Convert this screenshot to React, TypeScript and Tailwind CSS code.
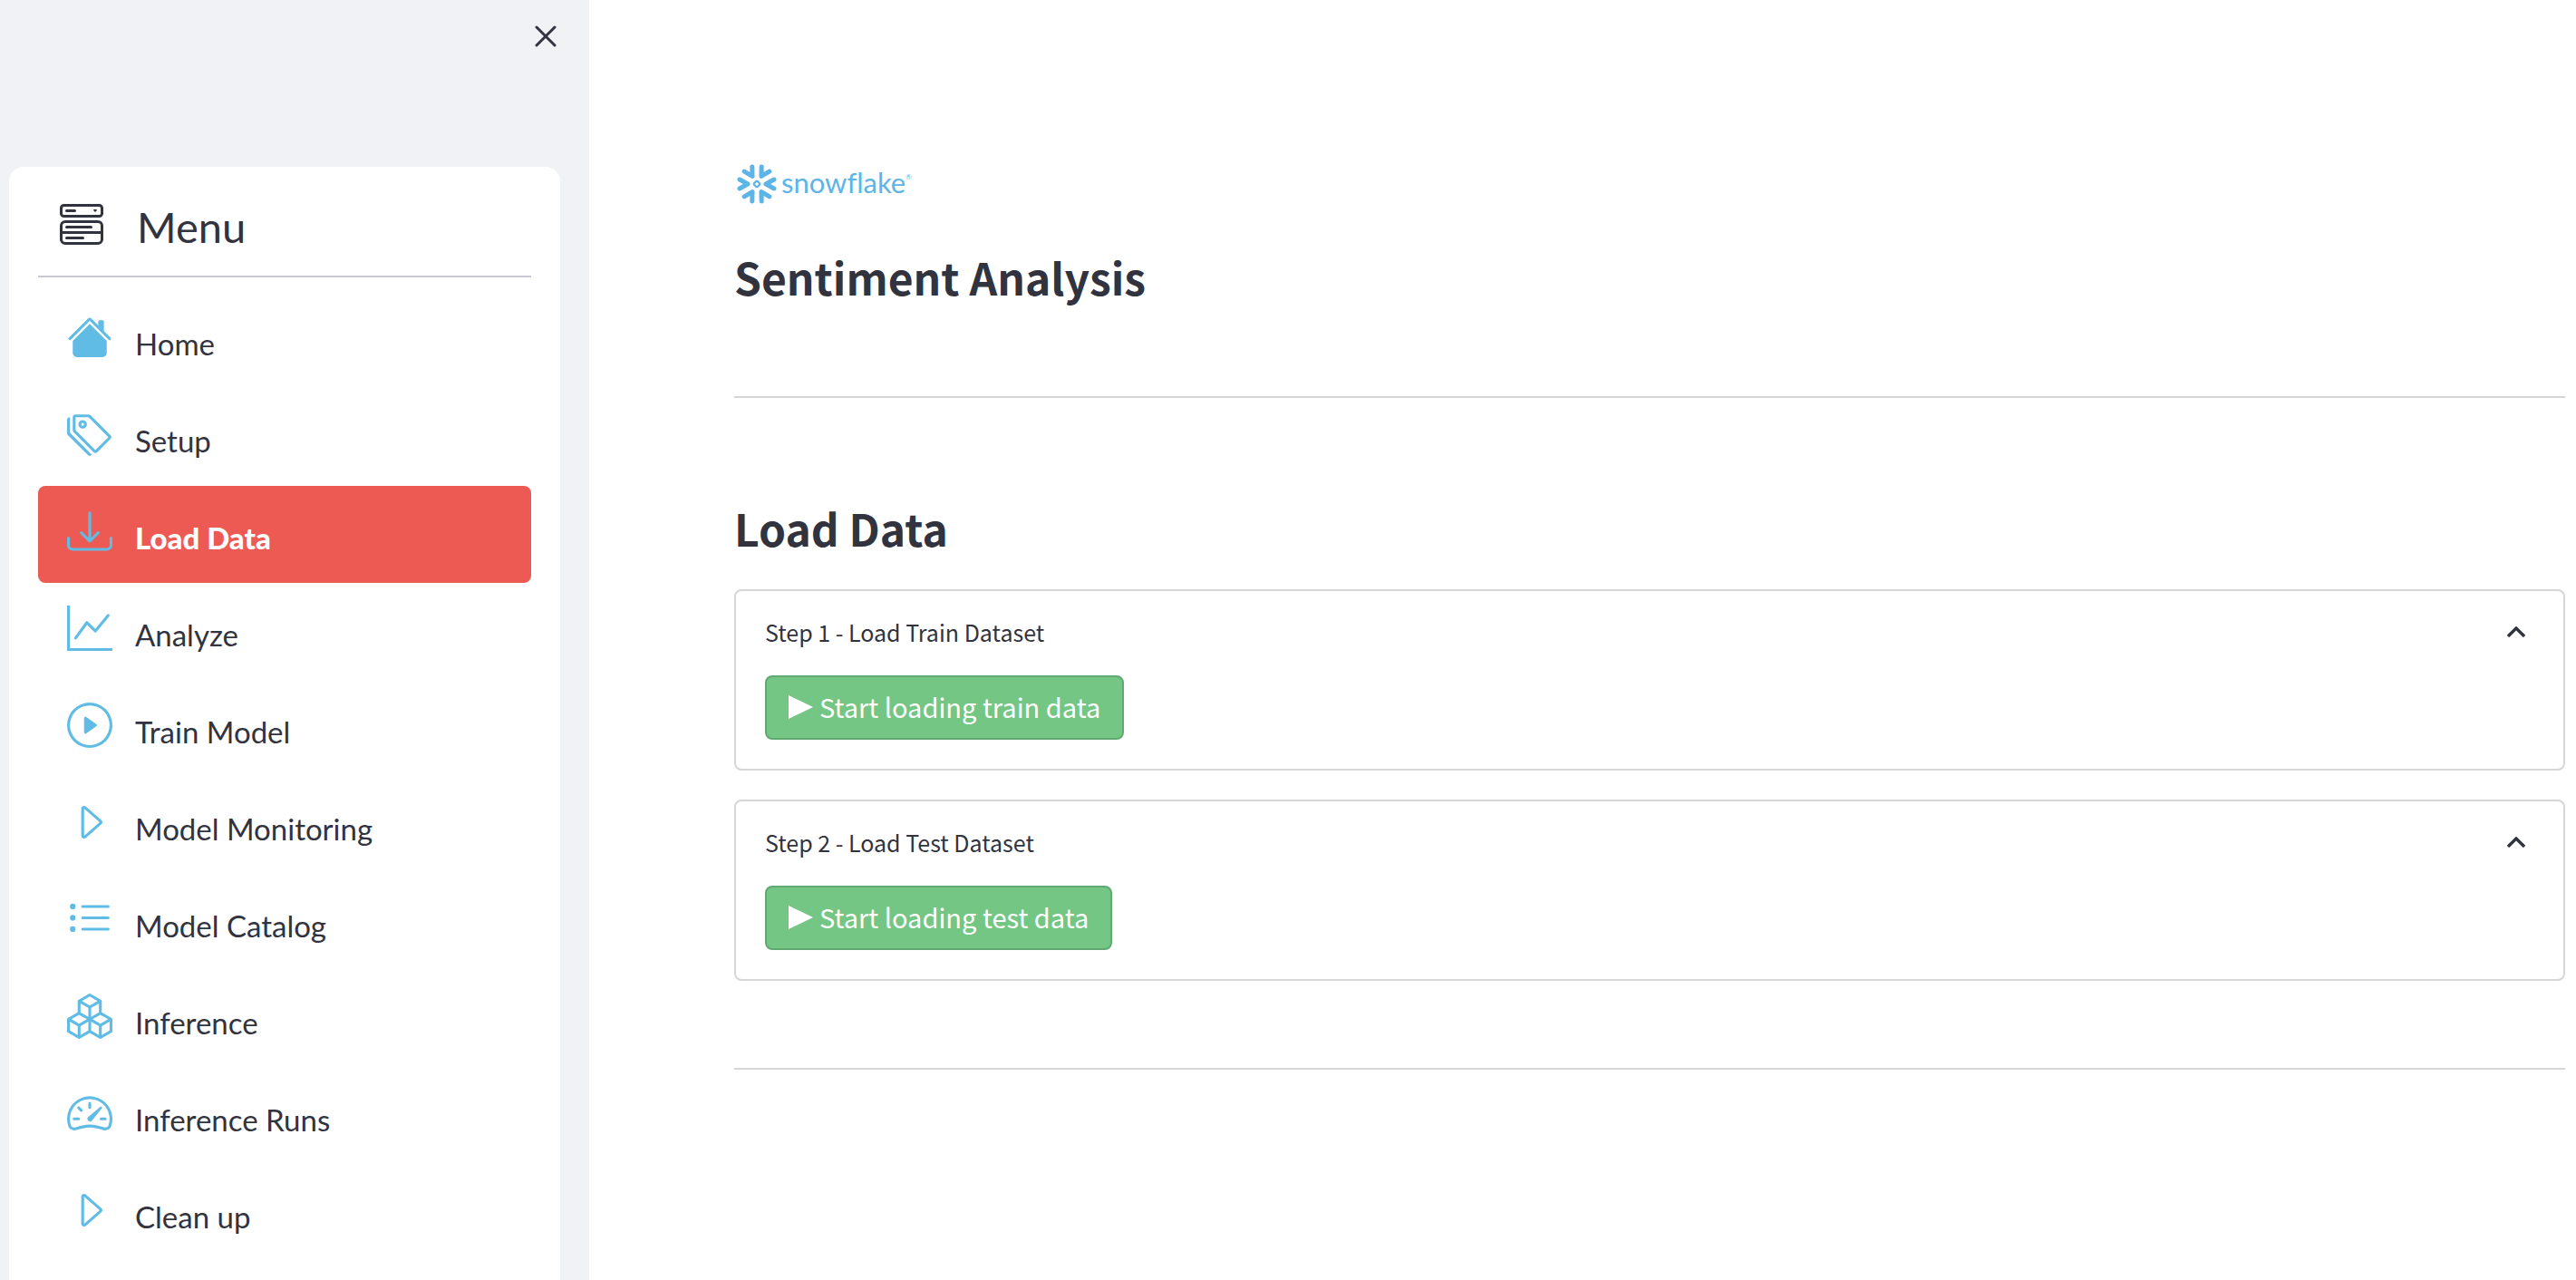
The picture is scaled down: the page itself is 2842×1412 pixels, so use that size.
import { BsBoxes, BsCaretRight, BsDownload, BsGraphUp, BsListUl, BsMenuButtonWide, BsPlayCircle, BsSpeedometer2, BsTags } from "react-icons/bs";
import type { ComponentType } from "react";

type IconProps = { className?: string };

function HouseIcon({ className }: IconProps) {
  return (
    <svg viewBox="0 0 16 16" fill="currentColor" className={className} aria-hidden="true">
      <path d="m8 3.293 6 6V13.5a1.5 1.5 0 0 1-1.5 1.5h-9A1.5 1.5 0 0 1 2 13.5V9.293l6-6zm5-.793V6l-2-2V2.5a.5.5 0 0 1 .5-.5h1a.5.5 0 0 1 .5.5z" />
      <path d="M7.293 1.5a1 1 0 0 1 1.414 0l6.647 6.646a.5.5 0 0 1-.708.708L8 2.207 1.354 8.854a.5.5 0 1 1-.708-.708L7.293 1.5z" />
    </svg>
  );
}

const items: { label: string; Icon: ComponentType<IconProps>; active?: boolean }[] = [
  { label: "Home", Icon: HouseIcon },
  { label: "Setup", Icon: BsTags },
  { label: "Load Data", Icon: BsDownload, active: true },
  { label: "Analyze", Icon: BsGraphUp },
  { label: "Train Model", Icon: BsPlayCircle },
  { label: "Model Monitoring", Icon: BsCaretRight },
  { label: "Model Catalog", Icon: BsListUl },
  { label: "Inference", Icon: BsBoxes },
  { label: "Inference Runs", Icon: BsSpeedometer2 },
  { label: "Clean up", Icon: BsCaretRight },
];

const arms = [0, 60, 120, 180, 240, 300];

function SnowflakeLogo() {
  return (
    <div className="flex h-11 items-center gap-1 pl-0.5 text-[#5db4e6]">
      <svg viewBox="-23 -22 46 44" className="h-11 w-[46px]" fill="none" stroke="currentColor" strokeLinecap="round" strokeLinejoin="round" aria-hidden="true">
        {arms.map((a) => (
          <path key={a} d="M10 0 19 -5M10 0 19 5" strokeWidth="5" transform={`rotate(${a})`} />
        ))}
        <rect x="-2.6" y="-2.6" width="5.2" height="5.2" rx="1" strokeWidth="2.2" transform="rotate(45)" />
      </svg>
      <span className="flex items-start pb-1 font-[Lato,sans-serif] text-[31px] leading-9 [font-variant-ligatures:none]">
        snowflake<span className="text-[8px] leading-6">®</span>
      </span>
    </div>
  );
}

function Step({ title, action }: { title: string; action: string }) {
  return (
    <section className="rounded-lg border-2 border-[#d6d6d6] px-8 pt-[27px] pb-8">
      <button type="button" aria-expanded="true" className="flex w-full items-center justify-between text-left text-[25px] leading-9">
        {title}
        <svg viewBox="0 0 20 12" className="mr-[10px] h-3 w-5" fill="none" stroke="currentColor" strokeWidth="3.4" aria-hidden="true">
          <path d="m1 11 9-9 9 9" />
        </svg>
      </button>
      <button type="button" className="mt-[30px] flex h-[71px] items-start gap-[7px] rounded-lg border-2 border-[#62a873] bg-[#73c683] px-6 pt-3 text-[29px] leading-10 text-white">
        <svg viewBox="0 0 27 26" className="mt-2 h-[26px] w-[27px]" fill="currentColor" aria-hidden="true">
          <path d="M0 0 27 13 0 26z" />
        </svg>
        {action}
      </button>
    </section>
  );
}

export default function App() {
  return (
    <div className="flex h-screen overflow-hidden bg-white text-[#31333f]">
      <aside className="flex w-[650px] shrink-0 flex-col bg-[#f0f2f6] pr-8 pl-[10px] font-[Lato,sans-serif]">
        <div className="flex h-[184px] shrink-0 items-start justify-end pt-7">
          <button type="button" aria-label="Close menu" className="mr-1">
            <svg viewBox="0 0 24 24" className="size-6" fill="none" stroke="currentColor" strokeWidth="3" strokeLinecap="round" aria-hidden="true">
              <path d="m2 2 20 20M22 2 2 22" />
            </svg>
          </button>
        </div>
        <div className="grow rounded-t-2xl bg-white px-8 pt-[41px]">
          <div className="flex h-[81px] items-start border-b-2 border-[#c9cad1] pl-6">
            <BsMenuButtonWide className="size-12" />
            <h2 className="ml-[37px] text-[47px] leading-[50px]">Menu</h2>
          </div>
          <nav className="mt-4">
            {items.map(({ label, Icon, active }) => (
              <a
                key={label}
                href="#"
                aria-current={active ? "page" : undefined}
                className={
                  active
                    ? "flex h-[107px] items-start rounded-lg bg-[#ed5a53] px-8 pt-[25px] font-black text-white"
                    : "flex h-[107px] items-start px-8 pt-[25px]"
                }
              >
                <Icon className="size-[50px] text-[#60bce4]" />
                <span className="mt-3 ml-[25px] text-[33px] leading-10">{label}</span>
              </a>
            ))}
          </nav>
        </div>
      </aside>
      <main className="min-w-0 grow pt-[181px] pr-3 pl-40 font-['Noto_Sans_CJK_SC',sans-serif]">
        <SnowflakeLogo />
        <h1 className="mt-10 text-[48px] leading-[80px] font-bold">Sentiment Analysis</h1>
        <hr className="mt-[92px] border-t-2 border-[#d6d6d6]" />
        <h2 className="mt-[103px] text-[48px] leading-[80px] font-bold">Load Data</h2>
        <div className="mt-7 flex flex-col gap-8">
          <Step title="Step 1 - Load Train Dataset" action="Start loading train data" />
          <Step title="Step 2 - Load Test Dataset" action="Start loading test data" />
        </div>
        <hr className="mt-24 border-t-2 border-[#d6d6d6]" />
      </main>
    </div>
  );
}
